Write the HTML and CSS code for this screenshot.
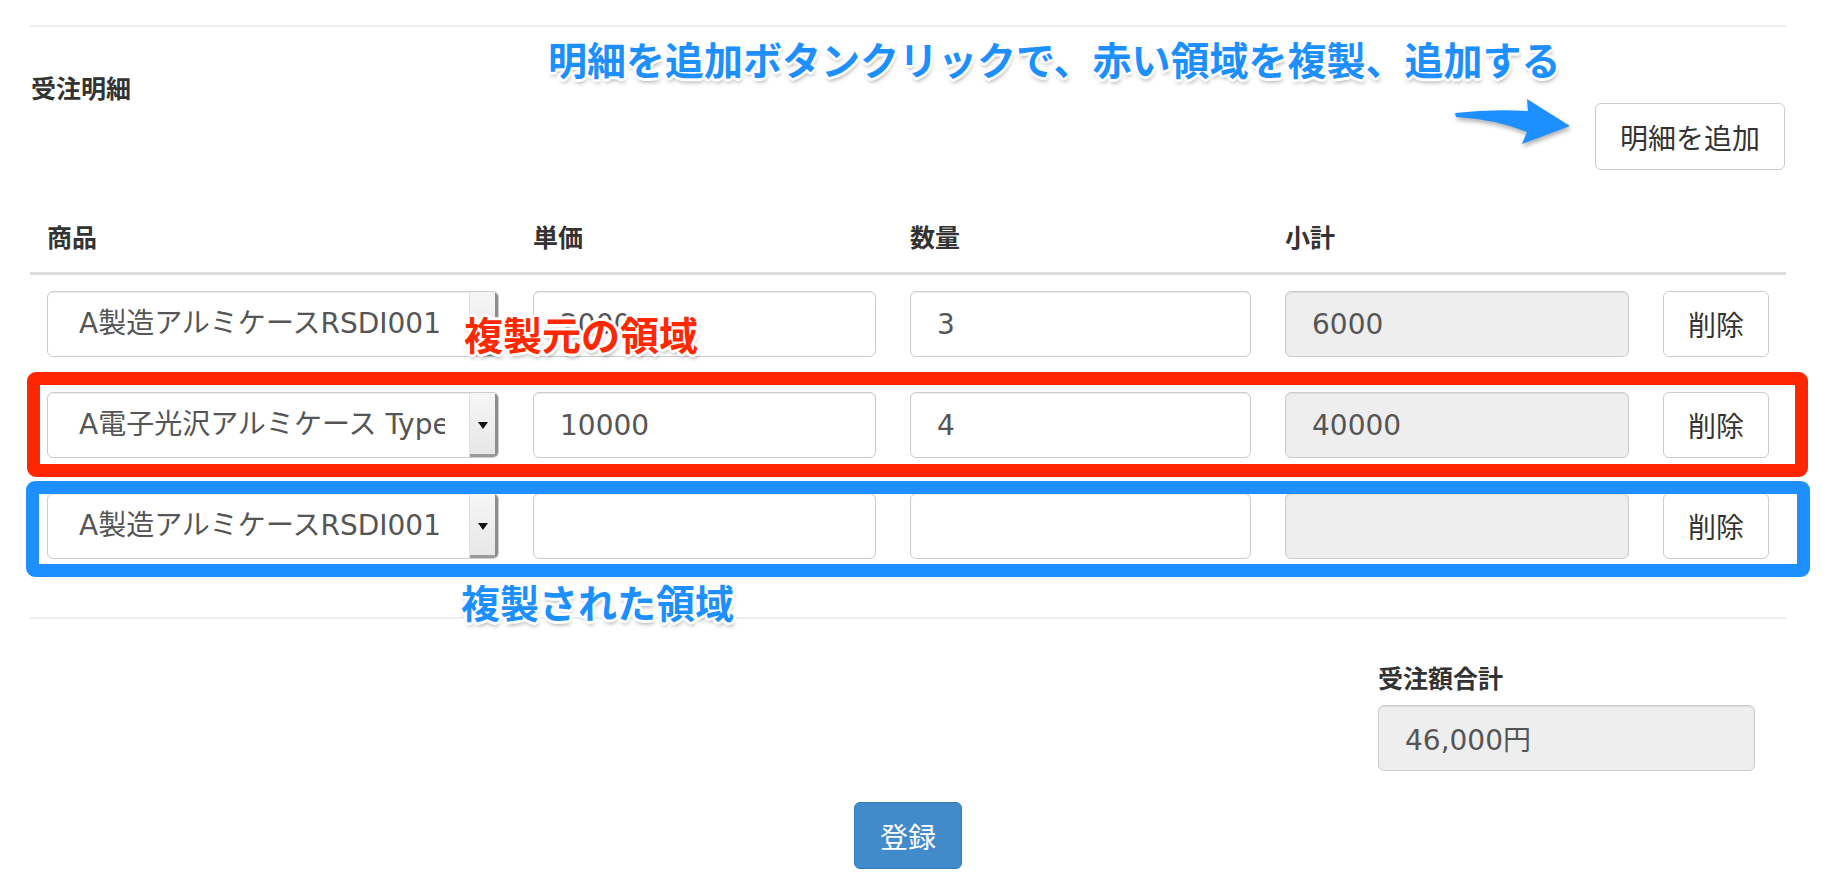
FILE: index.html
```html
<!DOCTYPE html>
<html lang="ja">
<head>
<meta charset="utf-8">
<title>受注明細</title>
<link rel="stylesheet" href="styles.css">
</head>
<body>
<div class="page">
  <div class="container">
    <hr class="rule">
    <div class="detail-head">
      <h3 class="section-title">受注明細</h3>
      <button class="btn btn-add">明細を追加</button>
    </div>

    <div class="detail-table">
      <div class="thead">
        <div class="th">商品</div>
        <div class="th">単価</div>
        <div class="th">数量</div>
        <div class="th">小計</div>
        <div class="th"></div>
      </div>
      <div class="tbody">
        <div class="trow">
          <div class="select">
            <div class="select-value">A製造アルミケースRSDI001</div>
            <div class="select-arrow"><span class="caret"></span></div>
          </div>
          <input class="field" type="text" value="2000">
          <input class="field" type="text" value="3">
          <input class="field field-readonly" type="text" value="6000" readonly>
          <button class="btn btn-del">削除</button>
        </div>
        <div class="trow">
          <div class="select">
            <div class="select-value">A電子光沢アルミケース Type-X</div>
            <div class="select-arrow"><span class="caret"></span></div>
          </div>
          <input class="field" type="text" value="10000">
          <input class="field" type="text" value="4">
          <input class="field field-readonly" type="text" value="40000" readonly>
          <button class="btn btn-del">削除</button>
        </div>
        <div class="trow">
          <div class="select">
            <div class="select-value">A製造アルミケースRSDI001</div>
            <div class="select-arrow"><span class="caret"></span></div>
          </div>
          <input class="field" type="text" value="">
          <input class="field" type="text" value="">
          <input class="field field-readonly" type="text" value="" readonly>
          <button class="btn btn-del">削除</button>
        </div>
      </div>
    </div>

    <hr class="rule rule-bottom">

    <div class="total-group">
      <label class="total-label">受注額合計</label>
      <input class="field field-readonly total-field" type="text" value="46,000円" readonly>
    </div>

    <div class="submit-row">
      <button class="btn btn-primary">登録</button>
    </div>
  </div>

  <!-- annotations -->
  <div class="note note-blue note-top">明細を追加ボタンクリックで、赤い領域を複製、追加する</div>
  <svg class="note-arrow" width="125" height="55" viewBox="0 0 125 55">
    <path d="M5,18 Q40,14 78,16 L77,4 L120,31 L72,49 L77,37 Q45,24 6,22 Z" fill="#1e8fff"/>
  </svg>
  <div class="frame frame-red"></div>
  <div class="frame frame-blue"></div>
  <div class="note note-red note-source">複製元の領域</div>
  <div class="note note-blue note-copy">複製された領域</div>
</div>
</body>
</html>
```

FILE: styles.css
```css
* { box-sizing: border-box; }

html, body {
  margin: 0;
  padding: 0;
  background: #fff;
}

body {
  font-family: "Noto Sans CJK JP", sans-serif;
  color: #333;
}

.page {
  position: relative;
  width: 1832px;
  height: 896px;
  overflow: hidden;
}

.container {
  margin-left: 30px;
  width: 1756px;
}

.rule {
  margin: 25px 0 0;
  border: 0;
  border-top: 2px solid #eee;
  height: 0;
}

.rule-bottom {
  margin-top: 58px;
}

.detail-head {
  display: flex;
  justify-content: space-between;
  align-items: flex-start;
}

.section-title {
  margin: 42px 0 0 1px;
  font-size: 25px;
  line-height: 36px;
  font-weight: 700;
  color: #333;
}

.btn {
  font-family: "Noto Sans CJK JP", sans-serif;
  font-size: 28px;
  font-weight: 400;
  color: #333;
  background: #fff;
  border: 1px solid #ccc;
  border-radius: 6px;
  padding: 0;
  display: flex;
  align-items: center;
  justify-content: center;
}

.btn-add {
  margin-top: 76px;
  width: 190px;
  height: 67px;
  margin-right: 1px;
}

.btn-del {
  width: 106px;
  height: 66px;
}

.btn-primary {
  width: 108px;
  height: 67px;
  color: #fff;
  background: #428bca;
  border-color: #357ebd;
}

/* table */
.thead,
.trow {
  display: grid;
  grid-template-columns: 452px 343px 341px 344px 106px;
  column-gap: 34px;
  padding: 0 17px;
}

.thead {
  margin-top: 48px;
  padding-bottom: 18px;
  border-bottom: 3px solid #ddd;
}

.th {
  font-size: 25px;
  line-height: 36px;
  font-weight: 700;
  color: #333;
}

.tbody {
  padding-top: 16px;
  display: flex;
  flex-direction: column;
  gap: 35px;
}

.field {
  display: block;
  width: 100%;
  height: 66px;
  margin: 0;
  padding: 0 0 0 26px;
  font-family: "DejaVu Sans", "Noto Sans CJK JP", sans-serif;
  font-size: 28px;
  color: #555;
  background: #fff;
  border: 1px solid #ccc;
  border-radius: 6px;
  box-shadow: inset 0 1px 1px rgba(0, 0, 0, 0.075);
  outline: none;
}

.field-readonly {
  background: #eee;
}

/* select look-alike */
.select {
  display: flex;
  height: 66px;
  border: 1px solid #ccc;
  border-radius: 6px;
  background: #fff;
  overflow: hidden;
  box-shadow: inset 0 1px 1px rgba(0, 0, 0, 0.075);
}

.select-value {
  width: 397px;
  flex: none;
  padding-left: 31px;
  overflow: hidden;
  white-space: nowrap;
  text-overflow: clip;
  font-family: "DejaVu Sans", "Noto Sans CJK JP", sans-serif;
  font-size: 28px;
  line-height: 64px;
  color: #555;
}

.select-arrow {
  margin-left: auto;
  width: 29px;
  flex: none;
  display: flex;
  align-items: center;
  justify-content: center;
  padding-right: 3px;
  background: linear-gradient(#f6f6f6, #e6e6e6);
  border-left: 1px solid #e0e0e0;
  box-shadow: inset -3px 0 0 #8e8e8e, inset 0 -3px 0 #9a9a9a;
}

.caret {
  width: 0;
  height: 0;
  border-left: 5px solid transparent;
  border-right: 5px solid transparent;
  border-top: 7px solid #111;
}

/* totals */
.total-group {
  margin-top: 40px;
  margin-left: auto;
  margin-right: 31px;
  width: 377px;
}

.total-label {
  display: block;
  font-size: 25px;
  line-height: 36px;
  font-weight: 700;
  color: #333;
}

.total-field {
  margin-top: 10px;
}

.submit-row {
  margin-top: 31px;
  display: flex;
  justify-content: center;
}

/* annotations overlay */
.note {
  position: absolute;
  font-family: "Noto Sans CJK JP", sans-serif;
  font-weight: 700;
  font-size: 39px;
  line-height: 1;
  white-space: nowrap;
  text-shadow:
    3px 0 0 #fff, -3px 0 0 #fff, 0 3px 0 #fff, 0 -3px 0 #fff,
    2px 2px 0 #fff, -2px -2px 0 #fff, 2px -2px 0 #fff, -2px 2px 0 #fff,
    1px 4px 4px rgba(0, 0, 0, 0.35);
}

.note-blue { color: #1e8fff; }
.note-red { color: #ff2800; }

.note-top {
  left: 548px;
  top: 39px;
}

.note-source {
  left: 464px;
  top: 314px;
}

.note-copy {
  left: 461px;
  top: 582px;
}

.note-arrow {
  position: absolute;
  left: 1450px;
  top: 95px;
  filter: drop-shadow(1px 3px 2px rgba(0, 0, 0, 0.3));
}

.frame {
  position: absolute;
  border-width: 13px;
  border-style: solid;
  border-radius: 9px;
}

.frame-red {
  left: 27px;
  top: 372px;
  width: 1781px;
  height: 105px;
  border-color: #ff2600;
}

.frame-blue {
  left: 26px;
  top: 481px;
  width: 1784px;
  height: 96px;
  border-color: #1e8fff;
}
```
